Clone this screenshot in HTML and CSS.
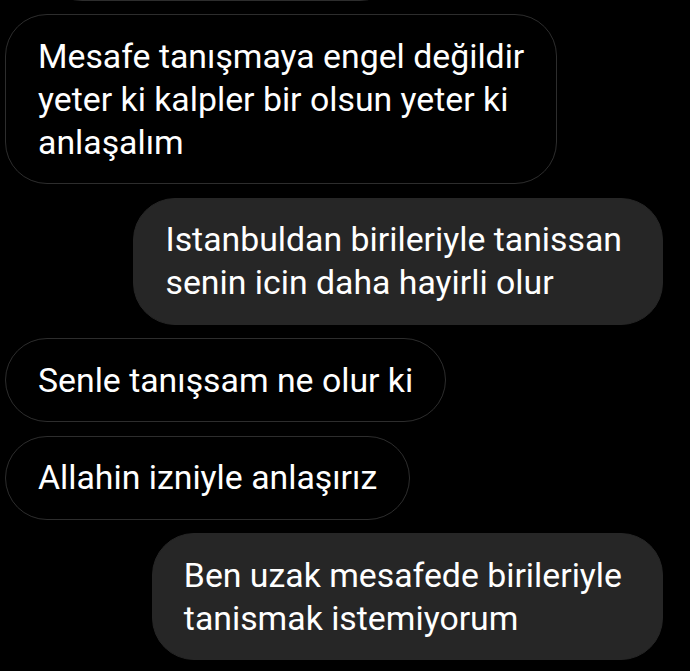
FILE: index.html
```html
<!DOCTYPE html>
<html lang="tr">
<head>
<meta charset="utf-8">
<link rel="stylesheet" href="styles.css">
</head>
<body>
<div class="chat">
  <div class="row in prev"><div class="bubble recv prev-bubble">&nbsp;</div></div>
  <div class="row in"><div class="bubble recv">Mesafe tanışmaya engel değildir<br>yeter ki kalpler bir olsun yeter ki<br>anlaşalım</div></div>
  <div class="row out"><div class="bubble sent">Istanbuldan birileriyle tanissan<br>senin icin daha hayirli olur</div></div>
  <div class="row in"><div class="bubble recv">Senle tanışsam ne olur ki</div></div>
  <div class="row in"><div class="bubble recv">Allahin izniyle anlaşırız</div></div>
  <div class="row out"><div class="bubble sent">Ben uzak mesafede birileriyle<br>tanismak istemiyorum</div></div>
</div>
</body>
</html>
```
FILE: styles.css
```css
html, body {
  margin: 0;
  padding: 0;
  background: #000;
  height: 100%;
  overflow: hidden;
}
.chat {
  display: flex;
  flex-direction: column;
  gap: 13.5px;
  padding: 0 27px 0 5px;
  margin-top: -83.5px;
  font-family: Roboto, "Noto Sans", sans-serif;
  font-size: 33.8px;
  line-height: 43px;
  color: #fff;
}
.row {
  display: flex;
}
.row.in { justify-content: flex-start; }
.row.out { justify-content: flex-end; }
.bubble {
  padding: 19.5px 32px;
  border-radius: 42px;
  white-space: nowrap;
}
.recv {
  border: 1.5px solid #2d2d2d;
  background: #000;
}
.sent {
  background: #262626;
  border: 1.5px solid #262626;
  padding-right: 40px;
  padding-left: 31px;
}
.prev-bubble {
  margin-left: 35px;
  width: 296px;
}
```
